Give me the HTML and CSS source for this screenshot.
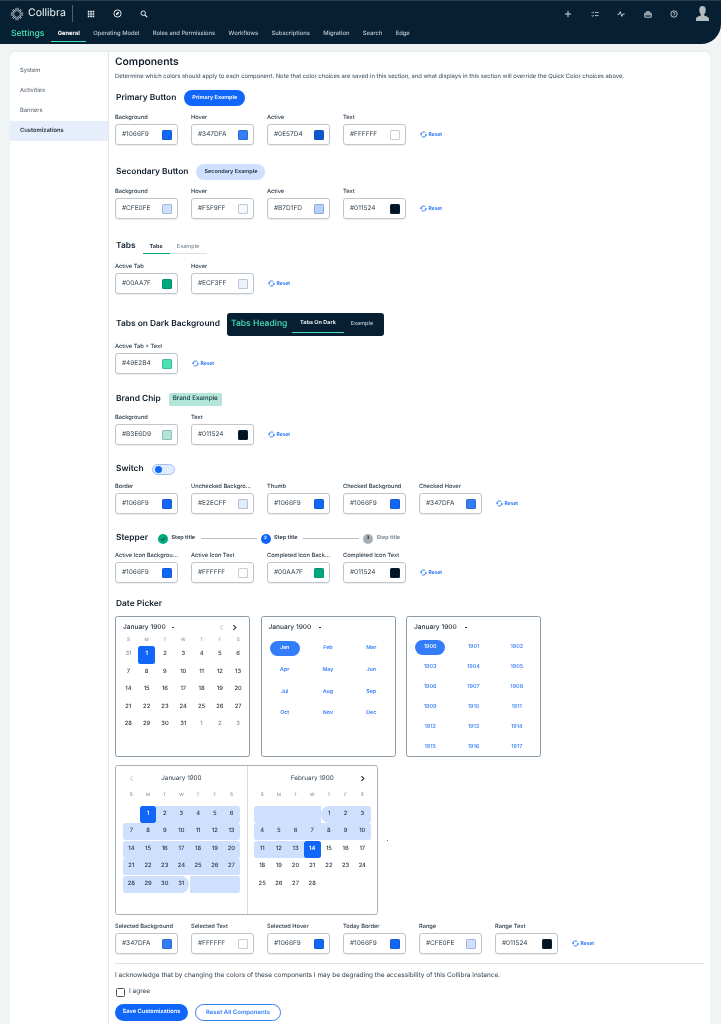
FILE: index.html
```html
<!DOCTYPE html>
<html lang="en">
<head>
<meta charset="utf-8">
<title>Settings - Collibra</title>
<link rel="stylesheet" href="styles.css">
</head>
<body>
<svg class="defs" width="0" height="0" aria-hidden="true">
  <symbol id="reset" viewBox="0 0 16 16"><path d="M2.500 7A5.600 5.600 0 0 1 12.600 4.400M13.500 9A5.600 5.600 0 0 1 3.400 11.600" fill="none" stroke="currentColor" stroke-width="1.800"/><path d="M0 6.500h5L2.500 10zM16 9.500h-5L13.500 6z" fill="currentColor"/></symbol>
  <symbol id="chev-l" viewBox="0 0 8 8"><path d="M5.200 1.200 2.500 4l2.700 2.800" fill="none" stroke="currentColor" stroke-width="1"/></symbol>
  <symbol id="chev-r" viewBox="0 0 8 8"><path d="M2.800 1.200 5.500 4 2.800 6.800" fill="none" stroke="currentColor" stroke-width="1.200"/></symbol>
</svg>
<header class="topbar">
  <div class="toprow">
    <svg class="logo" viewBox="0 0 14 14"><g stroke="#fff" stroke-width=".8" fill="none"><path d="M6 .8v3.600M8 .8v3.600M6 9.600v3.600M8 9.600v3.600M.8 6h3.600M.8 8h3.600M9.600 6h3.600M9.600 8h3.600M2.300 3.300l2.300 2M3.300 2.300l2 2.300M11.700 3.300l-2.300 2M10.700 2.300l-2 2.300M2.300 10.700l2.300-2M3.300 11.700l2-2.300M11.700 10.700l-2.300-2M10.700 11.700l-2-2.300"/></g></svg>
    <span class="brand">Collibra</span>
    <span class="divider"></span>
    <svg class="ticon t-grid" viewBox="0 0 10 10"><path fill="#fff" d="M1 1h2v2H1zM4 1h2v2H4zM7 1h2v2H7zM1 4h2v2H1zM4 4h2v2H4zM7 4h2v2H7zM1 7h2v2H1zM4 7h2v2H4zM7 7h2v2H7z"/></svg>
    <svg class="ticon t-compass" viewBox="0 0 10 10"><circle cx="5" cy="5" r="4" fill="none" stroke="#fff" stroke-width="1"/><path d="M7 3 5.900 5.900 3 7 4.100 4.100z" fill="#fff"/></svg>
    <svg class="ticon t-search" viewBox="0 0 10 10"><circle cx="4" cy="4" r="2.800" fill="none" stroke="#fff" stroke-width="1.100"/><path d="m6 6 3 3" stroke="#fff" stroke-width="1.300"/></svg>
    <div class="topright">
      <svg class="ticon" viewBox="0 0 10 10"><path d="M5 1v8M1 5h8" stroke="#fff" stroke-width="1"/></svg>
      <svg class="ticon" viewBox="0 0 10 10"><path d="M1 3l1 1 1.500-2M1 7l1 1 1.500-2M5 3.200h4.500M5 7h4.500" stroke="#fff" stroke-width=".9" fill="none"/></svg>
      <svg class="ticon" viewBox="0 0 10 10"><path d="M.5 5.500h2L4 2l2 6 1.300-3h2.200" stroke="#fff" stroke-width=".9" fill="none"/></svg>
      <svg class="ticon" viewBox="0 0 10 10"><path d="M1 4h8v5H1zM1 6h8M3 4V2.800L4 1.500 5 3l1-1.500L7 2.800V4M5 4v2" stroke="#fff" stroke-width=".9" fill="none"/></svg>
      <svg class="ticon" viewBox="0 0 10 10"><circle cx="5" cy="5" r="4" fill="none" stroke="#fff" stroke-width=".9"/><path d="M3.800 4A1.200 1.200 0 1 1 5 5.400V6" fill="none" stroke="#fff" stroke-width=".8"/><circle cx="5" cy="7.200" r=".5" fill="#fff"/></svg>
      <svg class="avatar" viewBox="0 0 14 16"><path fill="#b4bcc0" d="M7 0c2.200 0 3.500 1.700 3.500 4S9.700 7.800 8.800 9v1.200c1.800.6 5.200 1.400 5.200 3.800v2H0v-2c0-2.400 3.400-3.200 5.200-3.800V9C4.300 7.800 3.500 6.300 3.500 4S4.800 0 7 0z"/></svg>
    </div>
  </div>
  <nav class="navrow">
    <span class="settings">Settings</span>
    <a class="navitem navitem--on">General</a>
    <a class="navitem">Operating Model</a>
    <a class="navitem">Roles and Permissions</a>
    <a class="navitem">Workflows</a>
    <a class="navitem">Subscriptions</a>
    <a class="navitem">Migration</a>
    <a class="navitem">Search</a>
    <a class="navitem">Edge</a>
  </nav>
</header>

<div class="card">
  <aside class="side">
    <a class="sideitem">System</a>
    <a class="sideitem">Activities</a>
    <a class="sideitem">Banners</a>
    <a class="sideitem sideitem--on">Customizations</a>
  </aside>
  <main class="main">
    <h1 class="title">Components</h1>
    <p class="desc">Determine which colors should apply to each component. Note that color choices are saved in this section, and what displays in this section will override the Quick Color choices above.</p>

    <section class="sec sec-primary">
      <div class="head"><h2>Primary Button</h2><span class="btn btn--primary">Primary Example</span></div>
      <div class="fields">
        <div class="fld"><label>Background</label><div class="box">#1066F9<i class="sw s-1066"></i></div></div>
        <div class="fld"><label>Hover</label><div class="box">#347DFA<i class="sw s-347"></i></div></div>
        <div class="fld"><label>Active</label><div class="box">#0E57D4<i class="sw s-0e5"></i></div></div>
        <div class="fld"><label>Text</label><div class="box">#FFFFFF<i class="sw s-fff"></i></div></div>
        <a class="reset"><svg><use href="#reset"/></svg>Reset</a>
      </div>
    </section>

    <section class="sec sec-gap19">
      <div class="head"><h2>Secondary Button</h2><span class="btn btn--secondary">Secondary Example</span></div>
      <div class="fields">
        <div class="fld"><label>Background</label><div class="box">#CFE0FE<i class="sw s-cfe"></i></div></div>
        <div class="fld"><label>Hover</label><div class="box">#F5F9FF<i class="sw s-f5f"></i></div></div>
        <div class="fld"><label>Active</label><div class="box">#B7D1FD<i class="sw s-b7d"></i></div></div>
        <div class="fld"><label>Text</label><div class="box">#011524<i class="sw s-011"></i></div></div>
        <a class="reset"><svg><use href="#reset"/></svg>Reset</a>
      </div>
    </section>

    <section class="sec sec-gap19 sec-l8">
      <div class="head head--tabs"><h2>Tabs</h2>
        <div class="tabs"><span class="tab tab--on">Tabs</span><span class="tab">Example</span></div>
      </div>
      <div class="fields">
        <div class="fld"><label>Active Tab</label><div class="box">#00AA7F<i class="sw s-00a"></i></div></div>
        <div class="fld"><label>Hover</label><div class="box">#ECF3FF<i class="sw s-ecf"></i></div></div>
        <a class="reset"><svg><use href="#reset"/></svg>Reset</a>
      </div>
    </section>

    <section class="sec sec-gap22 sec-l10">
      <div class="head head--dark"><h2>Tabs on Dark Background</h2>
        <div class="darktabs"><span class="darkhead">Tabs Heading</span><span class="darktab darktab--on">Tabs On Dark</span><span class="darktab">Example</span></div>
      </div>
      <div class="fields">
        <div class="fld"><label>Active Tab + Text</label><div class="box">#49E2B4<i class="sw s-49e"></i></div></div>
        <a class="reset"><svg><use href="#reset"/></svg>Reset</a>
      </div>
    </section>

    <section class="sec sec-gap17 sec-l6">
      <div class="head"><h2>Brand Chip</h2><span class="chip">Brand Example</span></div>
      <div class="fields">
        <div class="fld"><label>Background</label><div class="box">#B3E6D9<i class="sw s-b3e"></i></div></div>
        <div class="fld"><label>Text</label><div class="box">#011524<i class="sw s-011"></i></div></div>
        <a class="reset"><svg><use href="#reset"/></svg>Reset</a>
      </div>
    </section>

    <section class="sec sec-gap16 sec-l5">
      <div class="head"><h2>Switch</h2><span class="switch"><i></i></span></div>
      <div class="fields">
        <div class="fld"><label>Border</label><div class="box">#1066F9<i class="sw s-1066"></i></div></div>
        <div class="fld"><label>Unchecked Background</label><div class="box">#E2ECFF<i class="sw s-e2e"></i></div></div>
        <div class="fld"><label>Thumb</label><div class="box">#1066F9<i class="sw s-1066"></i></div></div>
        <div class="fld"><label>Checked Background</label><div class="box">#1066F9<i class="sw s-1066"></i></div></div>
        <div class="fld"><label>Checked Hover</label><div class="box">#347DFA<i class="sw s-347"></i></div></div>
        <a class="reset"><svg><use href="#reset"/></svg>Reset</a>
      </div>
    </section>

    <section class="sec sec-gap16 sec-l5">
      <div class="head head--stepper"><h2>Stepper</h2>
        <div class="stepper">
          <span class="sicon sicon--done"><svg viewBox="0 0 10 10"><path d="M2.500 5.200 4.300 7l3.400-4" fill="none" stroke="#011524" stroke-width="1"/></svg></span><span class="stitle">Step title</span><span class="sline"></span>
          <span class="sicon sicon--active">2</span><span class="stitle">Step title</span><span class="sline"></span>
          <span class="sicon sicon--todo">3</span><span class="stitle stitle--todo">Step title</span>
        </div>
      </div>
      <div class="fields">
        <div class="fld"><label>Active Icon Background</label><div class="box">#1066F9<i class="sw s-1066"></i></div></div>
        <div class="fld"><label>Active Icon Text</label><div class="box">#FFFFFF<i class="sw s-fff"></i></div></div>
        <div class="fld"><label>Completed Icon Background</label><div class="box">#00AA7F<i class="sw s-00a"></i></div></div>
        <div class="fld"><label>Completed Icon Text</label><div class="box">#011524<i class="sw s-011"></i></div></div>
        <a class="reset"><svg><use href="#reset"/></svg>Reset</a>
      </div>
    </section>

    <section class="sec sec-date">
      <div class="head"><h2>Date Picker</h2></div>
      <div class="pickers">
        <div class="picker">
          <div class="phead"><span>January 1900</span><b class="caret"></b><svg class="chev chev--off chev-first"><use href="#chev-l"/></svg><svg class="chev"><use href="#chev-r"/></svg></div>
          <div class="cal">
            <u>S</u><u>M</u><u>T</u><u>W</u><u>T</u><u>F</u><u>S</u>
            <span class="muted">31</span><span class="sel">1</span><span>2</span><span>3</span><span>4</span><span>5</span><span>6</span>
            <span>7</span><span>8</span><span>9</span><span>10</span><span>11</span><span>12</span><span>13</span>
            <span>14</span><span>15</span><span>16</span><span>17</span><span>18</span><span>19</span><span>20</span>
            <span>21</span><span>22</span><span>23</span><span>24</span><span>25</span><span>26</span><span>27</span>
            <span>28</span><span>29</span><span>30</span><span>31</span><span class="muted">1</span><span class="muted">2</span><span class="muted">3</span>
          </div>
        </div>
        <div class="picker">
          <div class="phead"><span>January 1900</span><b class="caret caret--far"></b></div>
          <div class="mgrid">
            <span class="pill">Jan</span><span>Feb</span><span>Mar</span>
            <span>Apr</span><span>May</span><span>Jun</span>
            <span>Jul</span><span>Aug</span><span>Sep</span>
            <span>Oct</span><span>Nov</span><span>Dec</span>
          </div>
        </div>
        <div class="picker">
          <div class="phead"><span>January 1900</span><b class="caret caret--far"></b></div>
          <div class="ygrid">
            <span class="pill">1900</span><span>1901</span><span>1902</span>
            <span>1903</span><span>1904</span><span>1905</span>
            <span>1906</span><span>1907</span><span>1908</span>
            <span>1909</span><span>1910</span><span>1911</span>
            <span>1912</span><span>1913</span><span>1914</span>
            <span>1915</span><span>1916</span><span>1917</span>
          </div>
        </div>
      </div>

      <div class="rangeline">
        <div class="range">
          <div class="month">
            <div class="mhead"><svg class="chev chev--off"><use href="#chev-l"/></svg><span>January 1900</span><i class="chev"></i></div>
            <div class="dow"><u>S</u><u>M</u><u>T</u><u>W</u><u>T</u><u>F</u><u>S</u></div>
            <div class="week"><span></span><span class="sel">1</span><span class="in">2</span><span class="in">3</span><span class="in">4</span><span class="in">5</span><span class="in in--r">6</span></div>
            <div class="week"><span class="in in--l">7</span><span class="in">8</span><span class="in">9</span><span class="in">10</span><span class="in">11</span><span class="in">12</span><span class="in in--r">13</span></div>
            <div class="week"><span class="in in--l">14</span><span class="in">15</span><span class="in">16</span><span class="in">17</span><span class="in">18</span><span class="in">19</span><span class="in in--r">20</span></div>
            <div class="week"><span class="in in--l">21</span><span class="in">22</span><span class="in">23</span><span class="in">24</span><span class="in">25</span><span class="in">26</span><span class="in in--r">27</span></div>
            <div class="week"><span class="in in--l">28</span><span class="in">29</span><span class="in">30</span><span class="in in--end">31</span><span class="in blank"></span><span class="in blank"></span><span class="in in--r blank"></span></div>
          </div>
          <div class="month">
            <div class="mhead"><i class="chev"></i><span>February 1900</span><svg class="chev"><use href="#chev-r"/></svg></div>
            <div class="dow"><u>S</u><u>M</u><u>T</u><u>W</u><u>T</u><u>F</u><u>S</u></div>
            <div class="week"><span class="in in--l blank"></span><span class="in blank"></span><span class="in blank"></span><span class="in blank"></span><span class="in in--start">1</span><span class="in">2</span><span class="in in--r">3</span></div>
            <div class="week"><span class="in in--l">4</span><span class="in">5</span><span class="in">6</span><span class="in">7</span><span class="in">8</span><span class="in">9</span><span class="in in--r">10</span></div>
            <div class="week"><span class="in in--l">11</span><span class="in">12</span><span class="in">13</span><span class="sel">14</span><span>15</span><span>16</span><span>17</span></div>
            <div class="week"><span>18</span><span>19</span><span>20</span><span>21</span><span>22</span><span>23</span><span>24</span></div>
            <div class="week"><span>25</span><span>26</span><span>27</span><span>28</span><span></span><span></span><span></span></div>
          </div>
        </div>
        <span class="dot"></span>
      </div>

      <div class="fields fields--date">
        <div class="fld"><label>Selected Background</label><div class="box">#347DFA<i class="sw s-347"></i></div></div>
        <div class="fld"><label>Selected Text</label><div class="box">#FFFFFF<i class="sw s-fff"></i></div></div>
        <div class="fld"><label>Selected Hover</label><div class="box">#1066F9<i class="sw s-1066"></i></div></div>
        <div class="fld"><label>Today Border</label><div class="box">#1066F9<i class="sw s-1066"></i></div></div>
        <div class="fld"><label>Range</label><div class="box">#CFE0FE<i class="sw s-cfe"></i></div></div>
        <div class="fld"><label>Range Text</label><div class="box">#011524<i class="sw s-011"></i></div></div>
        <a class="reset"><svg><use href="#reset"/></svg>Reset</a>
      </div>
    </section>

    <hr class="rule">
    <p class="ack">I acknowledge that by changing the colors of these components I may be degrading the accessibility of this Collibra instance.</p>
    <div class="agree"><span class="check"></span>I agree</div>
    <div class="actions"><span class="btn btn--save">Save Customizations</span><span class="btn btn--outline">Reset All Components</span></div>
  </main>
</div>
</body>
</html>
```

FILE: styles.css
```css
* { box-sizing: border-box; }
html, body { margin: 0; height: 100%; }
html { background: #f0f4f4; }
body {
  width: 721px; height: 1024px; overflow: hidden;
  background: #f0f4f4; color: #0f1f2e;
  font-family: Inter, "Liberation Sans", sans-serif;
  font-size: 6px; line-height: 1.2;
  text-rendering: geometricPrecision;
  filter: blur(.3px);
}
.defs { position: absolute; }
a { color: inherit; text-decoration: none; }

/* header */
.topbar {
  height: 44px; background: #061f33; border-top: 1px solid #2a3c4c;
  border-bottom-right-radius: 20px;
  display: flex; flex-direction: column;
}
.toprow { height: 25px; display: flex; align-items: center; padding-left: 10px; }
.logo { width: 14px; height: 14px; margin-right: 4px; }
.brand { color: #f0f4f4; font-size: 10.500px; width: 44px; white-space: nowrap; }
.divider { width: 1px; height: 17px; background: #51606e; }
.ticon { width: 8px; height: 8px; display: block; }
.t-grid { margin-left: 14px; }
.t-compass { margin-left: 18px; width: 9px; height: 9px; }
.t-search { margin-left: 18px; }
.topright { margin-left: auto; display: flex; align-items: center; gap: 18.600px; padding-right: 12px; }
.avatar { width: 13px; height: 15px; margin-left: -1px; }
.navrow { flex: 1; display: flex; align-items: stretch; padding-left: 11px; }
.settings { color: #49e2b4; font-size: 8.600px; font-weight: 500; width: 40px; line-height: 16px; }
.navitem {
  color: #c3cbd2; font-weight: 500; font-size: 5.800px; padding: 0 6.700px;
  line-height: 16px; height: 16px; white-space: nowrap;
}
.navitem--on { color: #fff; font-weight: 700; border-bottom: 1.200px solid #49e2b4; }

/* card */
.card {
  margin: 8px 11px 0 10px; background: #fff; border-radius: 5px 5px 0 0;
  box-shadow: 0 -1px 2px rgba(0, 30, 50, .06);
  display: flex; height: 1000px;
}
.side { width: 99px; flex: none; border-right: 1px solid #e2e6e8; padding-top: 9px; display: flex; flex-direction: column; }
.sideitem { height: 20px; display: flex; align-items: center; padding: 1px 0 0 10px; font-size: 5.800px; color: #4a5864; }
.sideitem--on { background: #e6eefc; font-weight: 600; color: #1f2d3a; }
.main { flex: 1; padding: 4px 6px 0 6px; min-width: 0; }
.title { margin: 0; font-size: 10.300px; font-weight: 600; height: 13px; line-height: 13px; }
.desc { margin: 4px 0 0; font-size: 5.850px; line-height: 8px; color: #33424f; white-space: nowrap; }

/* sections */
.sec { --lab: 7px; }
.sec-primary { margin-top: 9px; }
.sec-gap19 { margin-top: 19px; }
.sec-gap22 { margin-top: 22px; }
.sec-gap17 { margin-top: 17px; }
.sec-gap16 { margin-top: 16px; }
.sec-l8 { --lab: 8px; }
.sec-l10 { --lab: 10px; }
.sec-l6 { --lab: 6px; }
.sec-l5 { --lab: 5px; }
.sec-date { margin-top: 13px; }
.head { height: 16px; display: flex; align-items: center; gap: 8px; margin-bottom: var(--lab); padding-left: 1px; }
.head--tabs { gap: 7px; }
.head--dark { gap: 7px; }
.head--stepper { gap: 10px; }
h2 { margin: 0; padding-top: 1px; font-size: 8.400px; font-weight: 600; color: #0f1f2e; white-space: nowrap; }
.fields { display: flex; gap: 13px; align-items: flex-end; }
.fld { width: 63px; flex: none; }
.fld label {
  display: block; height: 8px; line-height: 9px; margin-bottom: 3px;
  font-size: 5.700px; font-weight: 500; color: #2a3946;
  overflow: hidden; white-space: nowrap; text-overflow: ellipsis;
}
.box {
  height: 21px; border: 1px solid #bfc7cd; border-radius: 3px;
  display: flex; align-items: center; justify-content: space-between;
  padding: 0 5px 0 6px; font-size: 6.500px; color: #34434f; box-shadow: 0 .5px 1px rgba(0, 20, 40, .08);
}
.sw { width: 10px; height: 10px; border-radius: 1.500px; display: block; border: .5px solid rgba(40, 60, 80, .25); }
.s-1066 { background: #1066f9; }
.s-347 { background: #347dfa; }
.s-0e5 { background: #0e57d4; }
.s-fff { background: #fff; }
.s-cfe { background: #cfe0fe; }
.s-f5f { background: #f5f9ff; }
.s-b7d { background: #b7d1fd; }
.s-011 { background: #011524; }
.s-00a { background: #00aa7f; }
.s-ecf { background: #ecf3ff; }
.s-49e { background: #49e2b4; }
.s-b3e { background: #b3e6d9; }
.s-e2e { background: #e2ecff; }
.reset {
  display: flex; align-items: center; gap: 1.500px; height: 21px; margin-left: 1px;
  color: #1066f9; font-size: 5px; font-weight: 600;
}
.reset svg { width: 7px; height: 7px; }

/* buttons */
.btn { display: flex; align-items: center; justify-content: center; border-radius: 9px; font-weight: 600; font-size: 5.500px; height: 16px; white-space: nowrap; }
.btn--primary { width: 61px; background: #1066f9; color: #fff; }
.btn--secondary { width: 69px; background: #cfe0fe; color: #1f2e3c; }
.chip { background: #b3e6d9; color: #11303a; font-size: 6.300px; height: 13px; width: 53px; display: flex; align-items: center; justify-content: center; border-radius: 1.500px; font-weight: 500; white-space: nowrap; }

/* tabs */
.tabs { display: flex; height: 16px; border-bottom: .7px solid #dde2e5; align-items: stretch; }
.tab { width: 37px; display: flex; align-items: center; justify-content: center; padding-top: 3px; font-size: 5.500px; color: #7f8b94; font-weight: 500; }
.tab--on { width: 27px; color: #1f2d3a; font-weight: 700; border-bottom: 1.200px solid #00aa7f; margin-bottom: -.7px; }
.darktabs { width: 157px; height: 23px; background: #061f33; border-radius: 3px; display: flex; align-items: flex-start; padding-left: 4px; flex: none; }
.darkhead { color: #49e2b4; font-size: 8.600px; font-weight: 500; width: 61px; height: 23px; padding-top: 1px; display: flex; align-items: center; white-space: nowrap; }
.darktab { color: #c3cbd2; font-size: 5.500px; font-weight: 500; display: flex; align-items: flex-end; justify-content: center; width: 36px; height: 20px; padding-bottom: 4.700px; white-space: nowrap; }
.darktab--on { width: 52px; color: #fff; font-weight: 600; border-bottom: 1px solid #49e2b4; }

.switch { width: 23px; height: 11px; border: 1px solid #9fbdf6; border-radius: 6px; background: #e2ecff; padding: 1px 2px; display: block; }
.switch i { display: block; width: 7px; height: 7px; border-radius: 50%; background: #1066f9; }

.stepper { display: flex; align-items: center; padding-top: 1px; }
.sicon { width: 10px; height: 10px; border-radius: 50%; display: flex; align-items: center; justify-content: center; font-size: 4.500px; font-weight: 600; flex: none; }
.sicon svg { width: 8px; height: 8px; }
.sicon--done { background: #00aa7f; }
.sicon--active { background: #1066f9; color: #fff; }
.sicon--todo { background: #a7aeb4; color: #1f2d3a; }
.stitle { font-size: 5.500px; font-weight: 600; width: 26px; margin-left: 3.500px; white-space: nowrap; color: #1f2d3a; }
.stitle--todo { color: #74808a; }
.sline { width: 56px; height: .7px; background: #b9c1c7; margin: 0 4px 0 3px; }

/* pickers */
.pickers { display: flex; gap: 10.500px; margin-top: -12px; }
.sec-date .head { margin-bottom: 16px; }
.picker { width: 135px; height: 141px; border: .8px solid #8c9aa5; border-radius: 2.500px; padding: 0 4px; flex: none; }
.phead { height: 21px; display: flex; align-items: center; padding-left: 3px; font-size: 6.600px; font-weight: 500; color: #25333f; white-space: nowrap; }
.caret { width: 2px; height: .8px; background: #25333f; margin-left: 6px; display: block; }
.caret--far { margin-left: 8px; }
.chev { width: 7px; height: 7px; flex: none; display: block; color: #111f2c; }
.chev--off { color: #aeb6bc; }
.chev-first { margin-left: auto; margin-right: 6px; }
.phead .chev:last-child { margin-right: 7px; }
.cal { display: grid; grid-template-columns: repeat(7, 18.300px); grid-template-rows: 11px repeat(5, 17.500px); margin: -3px 0 0 -.8px; }
.cal u, .dow u { text-decoration: none; font-size: 4.600px; color: #75818a; display: flex; align-items: center; justify-content: center; }
.cal u { height: 11px; }
.cal span { display: flex; align-items: center; justify-content: center; font-size: 5.800px; font-weight: 500; color: #1f2d3a; }
.cal .muted { color: #6d7983; font-weight: 400; }
.cal .sel { background: #1066f9; color: #fff; border-radius: 2.500px; margin: 0 .6px; font-weight: 600; }
.mgrid { display: grid; grid-template-columns: repeat(3, 43.300px); grid-auto-rows: 21.700px; margin: -.5px 0 0 -2.500px; }
.mgrid span, .ygrid span { display: flex; align-items: center; justify-content: center; color: #347dfa; font-size: 5.300px; font-weight: 600; }
.ygrid { display: grid; grid-template-columns: repeat(3, 43.300px); grid-auto-rows: 20px; margin: -.500px 0 0 -2.500px; }
.ygrid span { font-weight: 500; font-size: 5.500px; }
.mgrid .pill, .ygrid .pill { background: #347dfa; color: #fff; border-radius: 8px; margin: 3px 6.600px; }
.ygrid .pill { margin: 2.500px 6.600px; }

/* range */
.rangeline { display: flex; align-items: center; margin-top: 8px; }
.range { width: 263px; height: 150px; border: .8px solid #a7b1b9; border-radius: 2.500px; display: flex; flex: none; }
.month { flex: 1; padding: 0 7px; }
.month + .month { border-left: .7px solid #d7dce0; padding-left: 6px; }
.mhead { height: 25px; display: flex; align-items: center; justify-content: space-between; font-size: 6.300px; color: #2f3e4b; padding: 0 5px; white-space: nowrap; }
.dow { display: grid; grid-template-columns: repeat(7, 16.700px); height: 10px; align-items: center; }
.dow + .week { margin-top: 5px; }
.week { display: grid; grid-template-columns: repeat(7, 16.700px); height: 16.700px; margin-bottom: .8px; }
.week span { display: flex; align-items: center; justify-content: center; font-size: 5.800px; font-weight: 500; color: #1f2d3a; }
.week .in { background: #cfe0fe; }
.week .in--l { border-radius: 2.500px 0 0 2.500px; }
.week .in--r { border-radius: 0 2.500px 2.500px 0; }
.week .in--end { border-radius: 0 8px 8px 0; margin-right: .5px; }
.week .in--start { border-radius: 8px 0 0 8px; margin-left: .5px; }
.week .sel { background: #1066f9; color: #fff; border-radius: 2.500px; font-weight: 600; }
.dot { width: 1px; height: 1px; background: #6d7983; margin-left: 9px; }
.fields--date { margin-top: 7px; }

/* footer */
.rule { border: 0; border-top: .7px solid #dfe3e6; margin: 9px 0 0; }
.ack { margin: 7px 0 0; font-size: 6.500px; line-height: 9px; color: #33424f; white-space: nowrap; }
.agree { display: flex; align-items: center; gap: 4px; margin-top: 7px; font-size: 6.500px; color: #33424f; height: 10px; padding-left: 1px; }
.check { width: 9px; height: 9px; border: 1px solid #46545f; border-radius: 1.500px; }
.actions { display: flex; gap: 7px; margin-top: 7px; }
.btn--save { width: 73px; background: #1066f9; color: #fff; height: 17px; font-size: 5.700px; }
.btn--outline { width: 86px; height: 17px; border: .7px solid #347dfa; color: #347dfa; background: #fff; font-size: 6px; }
```
